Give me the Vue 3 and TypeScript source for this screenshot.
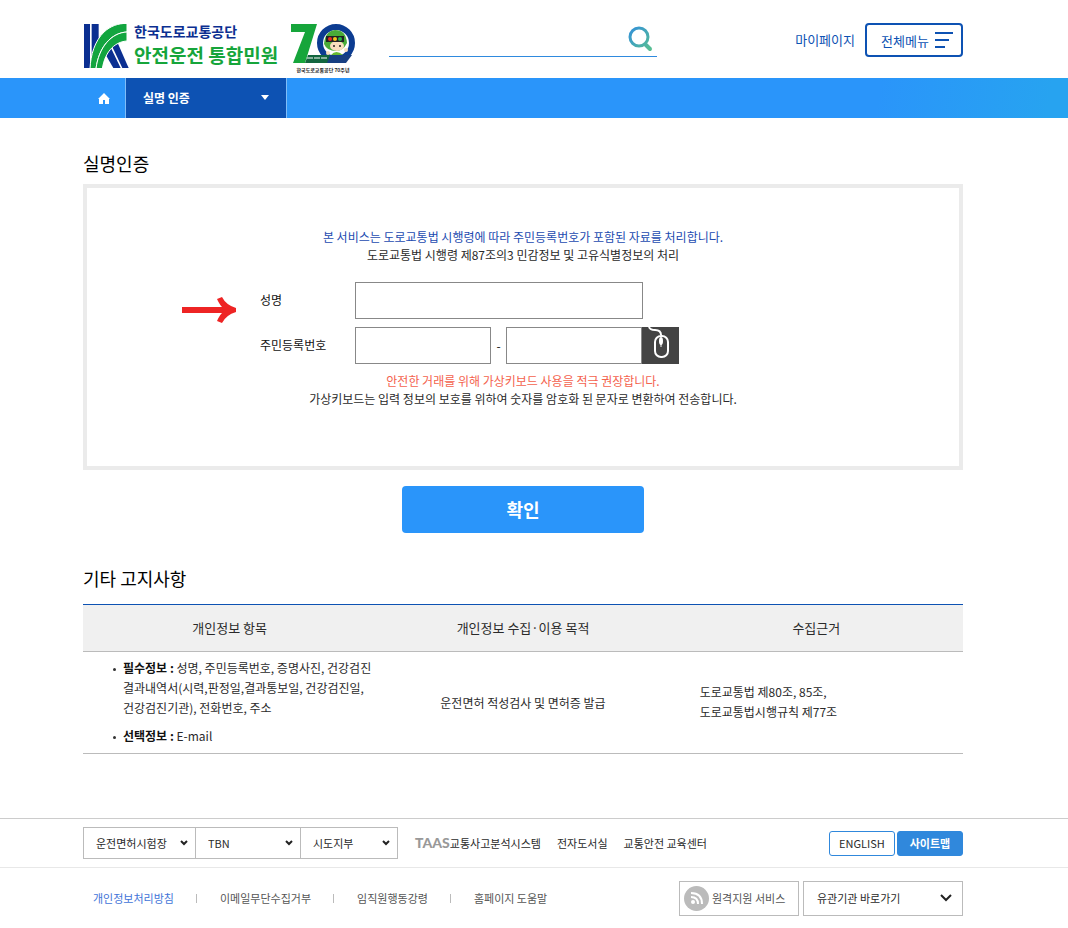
<script setup lang="ts">
import { ref } from 'vue'

interface NoticeItem {
  label: string
  text: string
}

interface FooterSelect {
  id: string
  label: string
  width: string
}

const keyword = ref('')
const userName = ref('')
const idFront = ref('')
const idBack = ref('')

const notices: NoticeItem[] = [
  {
    label: '필수정보 :',
    text: '성명, 주민등록번호, 증명사진, 건강검진 결과내역서(시력,판정일,결과통보일, 건강검진일, 건강검진기관), 전화번호, 주소',
  },
  { label: '선택정보 :', text: 'E-mail' },
]

const footerSelects: FooterSelect[] = [
  { id: 'exam', label: '운전면허시험장', width: 'w-exam' },
  { id: 'tbn', label: 'TBN', width: 'w-tbn' },
  { id: 'branch', label: '시도지부', width: 'w-branch' },
]

const policyLinks: string[] = ['개인정보처리방침', '이메일무단수집거부', '임직원행동강령', '홈페이지 도움말']
</script>

<template>
  <div class="page">
    <header class="wrap header">
      <a href="#" class="brand" aria-label="안전운전 통합민원">
        <svg class="mark" viewBox="0 0 136 132" aria-hidden="true">
          <g fill="#0b2f91">
            <path d="M2 0H20V132H2Z" />
            <path d="M25 0H46V66L25 100Z" />
            <path d="M60 80 80 66 112 132H90Z" />
            <path d="M84 62 100 50 136 132H117Z" />
          </g>
          <g fill="#12a53f" stroke="#fff" stroke-width="3">
            <path d="M131 -2V24C88 26 48 62 38 134H20C22 92 34 52 62 24C82 6 104 -2 131 -2Z" />
            <path d="M131 24V51C98 53 66 78 57 134H38C46 70 84 26 131 24Z" />
          </g>
        </svg>
        <span class="brand-text">
          <span class="brand-org">한국도로교통공단</span>
          <span class="brand-name">안전운전 통합민원</span>
        </span>
        <svg class="anniv" viewBox="0 0 66 52" aria-hidden="true">
          <path d="M1 2H27L15 41H3L15 10H1Z" fill="#16a53b" />
          <circle cx="46" cy="21" r="16" fill="#fff" stroke="#0c3c91" stroke-width="6" />
          <path d="M24 33H62L56 41H20Z" fill="#173f82" />
          <path d="M15 41 18 33H40L37 41Z" fill="#12663f" />
          <path d="M34 22Q35 9 45 8Q56 8 57 21Q53 29 46 29Q37 29 34 22Z" fill="#49ab38" />
          <ellipse cx="47" cy="24" rx="7" ry="5" fill="#f9dfbd" />
          <path d="M36 14H54V20H36Z" fill="#202323" />
          <circle cx="40" cy="17" r="2" fill="#e72b22" />
          <circle cx="45" cy="17" r="2" fill="#f6c51b" />
          <circle cx="50" cy="17" r="2" fill="#29b445" />
          <circle cx="44" cy="24" r="1" fill="#222" />
          <circle cx="50" cy="24" r="1" fill="#222" />
          <path d="M41 33Q46 27 53 33Z" fill="#67b931" />
          <circle cx="38" cy="31" r="2" fill="#f9dfbd" />
          <circle cx="56" cy="28" r="2" fill="#f9dfbd" />
          <path d="M17 36H37" stroke="#fff" stroke-width="1" stroke-dasharray="6 1" />
          <text x="33" y="50" text-anchor="middle" class="anniv-text">한국도로교통공단 70주년</text>
        </svg>
      </a>
      <form class="search" role="search" @submit.prevent>
        <input v-model="keyword" type="text" aria-label="검색어" />
        <button type="submit" aria-label="검색">
          <svg viewBox="0 0 26 26">
            <defs>
              <linearGradient id="search-color" x1="0" y1="0" x2="26" y2="26" gradientUnits="userSpaceOnUse">
                <stop offset="0" stop-color="#2f8ce0" />
                <stop offset="1" stop-color="#5cc48a" />
              </linearGradient>
            </defs>
            <g fill="none" stroke="url(#search-color)">
              <circle cx="12" cy="11" r="9" stroke-width="3" />
              <path d="M19 19 23 23" stroke-width="4" stroke-linecap="round" />
            </g>
          </svg>
        </button>
      </form>
      <div class="utility">
        <a href="#">마이페이지</a>
        <button type="button" class="all-menu">
          전체메뉴
          <svg viewBox="0 0 18 16" aria-hidden="true">
            <path d="M0 1H18M0 8H14M0 15H10" stroke="#0d52b3" stroke-width="2" />
          </svg>
        </button>
      </div>
    </header>

    <nav class="location" aria-label="현재 위치">
      <div class="wrap location-inner">
        <a href="#" class="home" aria-label="홈">
          <svg viewBox="0 0 12 11"><path d="M6 0 12 6H11V11H7V7H5V11H1V6H0Z" fill="#fff" /></svg>
        </a>
        <button type="button" class="current">
          실명 인증
          <svg viewBox="0 0 8 5" aria-hidden="true"><path d="M0 0H8L4 5Z" fill="#fff" /></svg>
        </button>
      </div>
    </nav>

    <main class="wrap main">
      <h1 class="title">실명인증</h1>
      <form class="verify" @submit.prevent>
        <div class="panel">
          <svg class="pointer" viewBox="0 0 54 26" aria-hidden="true">
            <path d="M0 13H46" stroke="#ee2424" stroke-width="6" />
            <path d="M35 2 40 0Q44 8 54 11V15Q44 18 40 26L35 24Q38 17 43 13Q38 9 35 2Z" fill="#ee2424" />
          </svg>
          <p class="guide">
            <span class="blue">본 서비스는 도로교통법 시행령에 따라 주민등록번호가 포함된 자료를 처리합니다.</span><br />
            도로교통법 시행령 제87조의3 민감정보 및 고유식별정보의 처리
          </p>
          <div class="fields">
            <label for="user-name">성명</label>
            <div class="control"><input id="user-name" v-model="userName" class="name-input" type="text" /></div>
            <label for="id-front">주민등록번호</label>
            <div class="control">
              <input id="id-front" v-model="idFront" class="id-input" type="text" maxlength="6" />
              <span class="dash">-</span>
              <input v-model="idBack" class="id-input" type="password" maxlength="7" aria-label="주민등록번호 뒷자리" />
              <button type="button" class="mouse" aria-label="가상키보드">
                <svg viewBox="0 0 37 37">
                  <g fill="none" stroke="#fff">
                    <path d="M7 0Q8 3 13 3Q19 3 19 8" stroke-width="2" />
                    <rect x="13" y="9" width="13" height="21" rx="6" stroke-width="2" />
                    <ellipse cx="19" cy="14" rx="1" ry="3" stroke-width="2" />
                    <path d="M19 17V20" />
                  </g>
                </svg>
              </button>
            </div>
          </div>
          <p class="guide">
            <span class="red">안전한 거래를 위해 가상키보드 사용을 적극 권장합니다.</span><br />
            가상키보드는 입력 정보의 보호를 위하여 숫자를 암호화 된 문자로 변환하여 전송합니다.
          </p>
        </div>
        <button type="submit" class="confirm">확인</button>
      </form>

      <h2 class="title">기타 고지사항</h2>
      <table class="notice">
        <thead>
          <tr>
            <th scope="col">개인정보 항목</th>
            <th scope="col">개인정보 수집·이용 목적</th>
            <th scope="col">수집근거</th>
          </tr>
        </thead>
        <tbody>
          <tr>
            <td>
              <ul>
                <li v-for="item in notices" :key="item.label"><strong>{{ item.label }}</strong> {{ item.text }}</li>
              </ul>
            </td>
            <td class="center">운전면허 적성검사 및 면허증 발급</td>
            <td>도로교통법 제80조, 85조,<br />도로교통법시행규칙 제77조</td>
          </tr>
        </tbody>
      </table>
    </main>

    <footer class="footer">
      <div class="footer-line">
        <div class="wrap footer-row">
          <div class="selects">
            <div v-for="s in footerSelects" :key="s.id" class="select" :class="s.width">
              <select :aria-label="s.label"><option>{{ s.label }}</option></select>
              <svg viewBox="0 0 8 6" aria-hidden="true"><path d="M1 1 4 4 7 1" fill="none" stroke="#222" stroke-width="2" /></svg>
            </div>
          </div>
          <div class="sites">
            <a href="#" class="taas-link"><span class="taas">TAAS</span>교통사고분석시스템</a>
            <a href="#">전자도서실</a>
            <a href="#">교통안전 교육센터</a>
          </div>
          <div class="buttons">
            <a href="#" class="btn">ENGLISH</a>
            <a href="#" class="btn solid">사이트맵</a>
          </div>
        </div>
      </div>
      <div class="wrap footer-row bottom">
        <ul class="policy">
          <li v-for="link in policyLinks" :key="link"><a href="#">{{ link }}</a></li>
        </ul>
        <div class="support">
          <a href="#" class="remote">
            <svg viewBox="0 0 25 25" aria-hidden="true">
              <circle cx="12.5" cy="12.5" r="12.5" fill="#bbb" />
              <circle cx="9" cy="16" r="2" fill="#fff" />
              <path d="M7 11Q14 11 14 18M7 7Q18 7 18 18" fill="none" stroke="#fff" stroke-width="2" />
            </svg>
            원격지원 서비스
          </a>
          <div class="select related">
            <select aria-label="유관기관 바로가기"><option>유관기관 바로가기</option></select>
            <svg viewBox="0 0 12 8" aria-hidden="true"><path d="M1 1 6 6 11 1" fill="none" stroke="#222" stroke-width="2" /></svg>
          </div>
        </div>
      </div>
    </footer>
  </div>
</template>

<style>
body {
  margin: 0;
  background: #fff;
}
</style>

<style scoped>
.page,
.page button,
.page input,
.page select {
  font-family: 'Noto Sans CJK KR', 'Noto Sans', sans-serif;
}
.page {
  color: #2a2a2a;
  font-size: 12px;
  line-height: 18px;
  word-break: keep-all;
}
.page * {
  box-sizing: border-box;
}
a {
  color: inherit;
  text-decoration: none;
}
button {
  padding: 0;
  border: 0;
  cursor: pointer;
}
input {
  outline: 0;
}
svg {
  display: block;
  flex: none;
}
.wrap {
  max-width: 902px;
  margin: 0 auto;
  padding-right: 22px;
}
.header {
  display: flex;
  align-items: flex-start;
  height: 78px;
}
.brand {
  display: flex;
  padding-top: 22px;
}
.mark {
  width: 46px;
  height: 44px;
  margin-top: 2px;
}
.brand-text {
  width: 156px;
  padding-left: 5px;
  font-weight: 700;
  white-space: nowrap;
}
.brand-org,
.brand-name {
  display: block;
}
.brand-org {
  color: #0b2f91;
  font-size: 14px;
  line-height: 18px;
}
.brand-name {
  color: #16a53b;
  font-size: 19px;
  line-height: 30px;
}
.anniv {
  width: 66px;
  height: 52px;
  margin-left: 5px;
}
.anniv-text {
  font-size: 5px;
  font-weight: 700;
  fill: #222;
}
.search {
  display: flex;
  width: 268px;
  height: 34px;
  margin: 23px 0 0 33px;
  border-bottom: 1px solid #2f8ade;
}
.search input {
  flex: 1;
  min-width: 0;
  padding: 0 8px;
  border: 0;
  background: none;
}
.search button {
  width: 26px;
  height: 26px;
  margin: 3px 4px 0 0;
  background: none;
}
.utility {
  display: flex;
  align-items: center;
  gap: 10px;
  margin: 23px 0 0 auto;
  color: #0d52b3;
  font-size: 13px;
}
.all-menu {
  display: flex;
  align-items: center;
  justify-content: space-between;
  width: 98px;
  height: 34px;
  padding: 0 8px 0 14px;
  border: 2px solid #0d52b3;
  border-radius: 4px;
  background: #fff;
  color: #0d52b3;
  font-size: 13px;
}
.all-menu svg {
  width: 18px;
  height: 16px;
}
.location {
  background: linear-gradient(100deg, #2a95fa 82%, #27a3f0 98%);
}
.location-inner {
  display: flex;
  height: 40px;
}
.home {
  display: flex;
  align-items: center;
  justify-content: center;
  width: 43px;
  border-right: 1px solid #7fbdf9;
}
.home svg {
  width: 12px;
  height: 11px;
}
.current {
  display: flex;
  align-items: center;
  justify-content: space-between;
  width: 161px;
  padding: 0 17px 2px;
  border-right: 1px solid #7fbdf9;
  background: #0d52b3;
  color: #fff;
  font-size: 12px;
  font-weight: 700;
}
.current svg {
  width: 8px;
  height: 5px;
}
.title {
  margin: 0;
  color: #000;
  font-size: 18px;
  font-weight: 400;
  line-height: 26px;
}
.main {
  padding-top: 32px;
}
.verify {
  margin-bottom: 32px;
}
.panel {
  position: relative;
  margin-top: 8px;
  padding: 40px 0 58px;
  border: 4px solid #ebebeb;
}
.pointer {
  position: absolute;
  top: 109px;
  left: 95px;
  width: 54px;
  height: 26px;
}
.guide {
  margin: 0;
  text-align: center;
}
.blue {
  color: #1c4bb0;
}
.red {
  color: #f4624d;
}
.fields {
  display: grid;
  grid-template-columns: 95px auto;
  row-gap: 8px;
  align-items: center;
  justify-content: start;
  margin: 18px 0 8px 173px;
  color: #111;
}
.fields label {
  padding-bottom: 2px;
}
.control {
  display: flex;
  align-items: center;
}
.control input {
  height: 37px;
  padding: 0 8px;
  border: 1px solid #888;
  background: #fff;
}
.name-input {
  width: 288px;
}
.id-input {
  width: 136px;
}
.dash {
  width: 15px;
  text-align: center;
}
.mouse {
  width: 37px;
  height: 37px;
  background: #444;
}
.confirm {
  display: block;
  width: 242px;
  height: 47px;
  margin: 16px auto 0;
  padding-bottom: 2px;
  border-radius: 4px;
  background: #2a95fa;
  color: #fff;
  font-size: 18px;
  font-weight: 700;
}
.notice {
  width: 100%;
  margin-top: 13px;
  border-top: 1px solid #0d52b3;
  border-collapse: collapse;
  table-layout: fixed;
}
.notice th {
  height: 47px;
  padding: 0;
  border-bottom: 1px solid #bbb;
  background: #f0f0f0;
  font-size: 13px;
  font-weight: 400;
}
.notice td {
  padding: 6px 0 7px 30px;
  border-bottom: 1px solid #bbb;
  line-height: 20px;
}
.notice .center {
  padding: 0;
  text-align: center;
}
.notice ul {
  margin: 0;
  padding: 0 0 0 10px;
  list-style: none;
}
.notice li {
  position: relative;
  max-width: 250px;
}
.notice li + li {
  margin-top: 8px;
}
.notice li::before {
  position: absolute;
  top: 10px;
  left: -10px;
  width: 3px;
  height: 3px;
  border-radius: 50%;
  background: #333;
  content: '';
}
.notice strong {
  color: #111;
}
.footer {
  margin-top: 64px;
  border-top: 1px solid #ccc;
  font-size: 11px;
}
.footer-line {
  border-bottom: 1px solid #e8e8e8;
}
.footer-row {
  display: flex;
  align-items: center;
  height: 48px;
}
.selects {
  display: flex;
  border: 1px solid #bbb;
}
.select {
  display: grid;
  align-items: center;
  height: 30px;
}
.select + .select {
  border-left: 1px solid #bbb;
}
.select select,
.select svg {
  grid-area: 1 / 1;
}
.select select {
  width: 100%;
  height: 100%;
  padding: 0 24px 0 12px;
  border: 0;
  appearance: none;
  background: none;
  color: #2a2a2a;
  font-size: 11px;
}
.select svg {
  justify-self: end;
  width: 8px;
  height: 6px;
  margin-right: 7px;
  pointer-events: none;
}
.w-exam {
  width: 111px;
}
.w-tbn {
  width: 105px;
}
.w-branch {
  width: 97px;
}
.sites {
  display: flex;
  gap: 16px;
  margin-left: 17px;
}
.taas-link {
  display: flex;
}
.taas {
  color: #999;
  font-family: Lato, sans-serif;
  font-size: 14px;
  font-weight: 900;
}
.buttons {
  display: flex;
  gap: 2px;
  margin-left: auto;
}
.btn {
  width: 66px;
  border: 1px solid #3088dc;
  border-radius: 3px;
  line-height: 23px;
  text-align: center;
}
.btn.solid {
  background: #3088dc;
  color: #fff;
  font-weight: 700;
}
.bottom {
  height: 60px;
}
.policy {
  display: flex;
  margin: 0;
  padding: 0 0 0 10px;
  color: #555;
  list-style: none;
}
.policy li {
  display: flex;
  align-items: center;
}
.policy li + li::before {
  width: 1px;
  height: 9px;
  margin: 0 23px 0 22px;
  background: #bbb;
  content: '';
}
.policy li:first-child {
  color: #3f74d8;
}
.support {
  display: flex;
  gap: 4px;
  margin-left: auto;
}
.remote {
  display: flex;
  align-items: center;
  gap: 3px;
  width: 120px;
  height: 35px;
  padding-left: 4px;
  border: 1px solid #bbb;
  color: #555;
}
.remote svg {
  width: 25px;
  height: 25px;
}
.select.related {
  width: 160px;
  height: 35px;
  border: 1px solid #bbb;
}
.related select {
  padding-left: 13px;
}
.related svg {
  width: 12px;
  height: 8px;
  margin-right: 10px;
}
</style>
